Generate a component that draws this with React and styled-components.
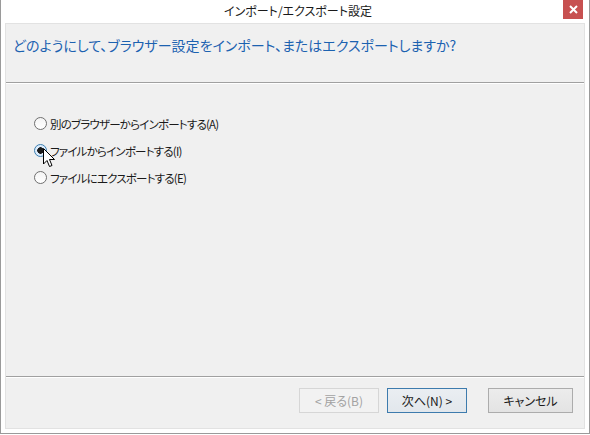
import React from "react";
import styled, { createGlobalStyle } from "styled-components";

const GlobalStyle = createGlobalStyle`
  html, body {
    margin: 0;
    padding: 0;
    background: #ffffff;
  }
  * {
    box-sizing: border-box;
  }
`;

const FONT = `"Noto Sans CJK JP", "Noto Sans", sans-serif`;

const options = [
  { id: "browser", label: "別のブラウザーからインポートする(A)", checked: false },
  { id: "import", label: "ファイルからインポートする(I)", checked: true },
  { id: "export", label: "ファイルにエクスポートする(E)", checked: false },
];

function Cursor() {
  return (
    <CursorSvg width="13" height="20" viewBox="0 0 13 20">
      <path
        d="M0.5 0.5 L0.5 16 L4 12.5 L6.5 18.5 L9 17.5 L6.5 11.5 L11.5 11.5 Z"
        fill="#ffffff"
        stroke="#000000"
        strokeWidth="1"
        strokeLinejoin="miter"
      />
    </CursorSvg>
  );
}

export default function App() {
  return (
    <>
      <GlobalStyle />
      <Window>
        <TitleBar>
          <Title>インポート/エクスポート設定</Title>
          <CloseButton>
            <svg width="9" height="9" viewBox="0 0 9 9">
              <path d="M1 1 L8 8 M8 1 L1 8" stroke="#ffffff" strokeWidth="2" />
            </svg>
          </CloseButton>
        </TitleBar>
        <Client>
          <Header>
            <Instruction>
              どのようにして、ブラウザー設定をインポート、またはエクスポートしますか?
            </Instruction>
          </Header>
          <Body>
            <OptionList>
              {options.map((opt) => (
                <Option key={opt.id}>
                  <Radio $checked={opt.checked} />
                  <OptionLabel>{opt.label}</OptionLabel>
                  {opt.checked && <Cursor />}
                </Option>
              ))}
            </OptionList>
          </Body>
          <Footer>
            <Button disabled $variant="disabled">&lt; 戻る(B)</Button>
            <Button $variant="default">次へ(N) &gt;</Button>
            <Button $wide $gap>キャンセル</Button>
          </Footer>
        </Client>
      </Window>
    </>
  );
}

/*
  Styles
*/

const Window = styled.div`
  width: 590px;
  height: 434px;
  border: 1px solid #9a9a9a;
  border-top: none;
  background: #ffffff;
  display: flex;
  flex-direction: column;
  padding: 0 4px 4px 4px;
  font-family: ${FONT};
  font-feature-settings: "palt";
`;

const TitleBar = styled.div`
  height: 23px;
  position: relative;
  display: flex;
  align-items: center;
  justify-content: center;
`;

const Title = styled.div`
  font-size: 12px;
  color: #1a1a1a;
  margin-left: 6px;
  margin-top: -2px;
`;

const CloseButton = styled.div`
  position: absolute;
  right: 2px;
  top: 0;
  width: 20px;
  height: 19px;
  background: #c75050;
  display: flex;
  align-items: center;
  justify-content: center;
`;

const Client = styled.div`
  flex: 1;
  background: #f0f0f0;
  border: 1px solid #e2e2e2;
  display: flex;
  flex-direction: column;
`;

const Header = styled.div`
  height: 59px;
  border-bottom: 1px solid #a0a0a0;
  box-shadow: 0 1px 0 #ffffff;
  padding: 11px 0 0 7px;
`;

const Instruction = styled.div`
  font-size: 14px;
  color: #1c62b0;
`;

const Body = styled.div`
  flex: 1;
  padding: 32px 0 0 28px;
  border-bottom: 1px solid #a0a0a0;
`;

const OptionList = styled.div`
  display: flex;
  flex-direction: column;
  gap: 10px;
`;

const Option = styled.label`
  position: relative;
  display: flex;
  align-items: center;
  height: 17px;
`;

const Radio = styled.span`
  width: 13px;
  height: 13px;
  border-radius: 50%;
  border: 1px solid ${({ $checked }) => ($checked ? "#3c7fb1" : "#6f6f6f")};
  background: ${({ $checked }) =>
    $checked
      ? "radial-gradient(circle, #1a1a1a 0 3px, #dcecfc 3.5px)"
      : "linear-gradient(#f4f4f4, #ffffff)"};
  margin-right: 3px;
  flex-shrink: 0;
`;

const OptionLabel = styled.span`
  font-size: 11.5px;
  letter-spacing: -0.8px;
  color: #1a1a1a;
`;

const CursorSvg = styled.svg`
  position: absolute;
  left: 9px;
  top: 6px;
`;

const Footer = styled.div`
  height: 51px;
  border-top: 1px solid #ffffff;
  display: flex;
  align-items: center;
  justify-content: flex-end;
  padding: 0 11px 6px 0;
`;

const Button = styled.button`
  width: ${({ $wide }) => ($wide ? "85px" : "80px")};
  height: 25px;
  margin-left: ${({ $gap }) => ($gap ? "21px" : "8px")};
  font-family: ${FONT};
  font-feature-settings: "palt";
  font-size: 12px;
  padding: 0;
  color: ${({ $variant }) => ($variant === "disabled" ? "#a2a2a2" : "#1a1a1a")};
  background: ${({ $variant }) =>
    $variant === "disabled"
      ? "#f2f2f2"
      : $variant === "default"
      ? "linear-gradient(#eaeef2, #e2e7ec)"
      : "linear-gradient(#ececec, #e3e3e3)"};
  border: 1px solid
    ${({ $variant }) =>
      $variant === "disabled"
        ? "#d6d6d6"
        : $variant === "default"
        ? "#3d7bad"
        : "#acacac"};
`;
